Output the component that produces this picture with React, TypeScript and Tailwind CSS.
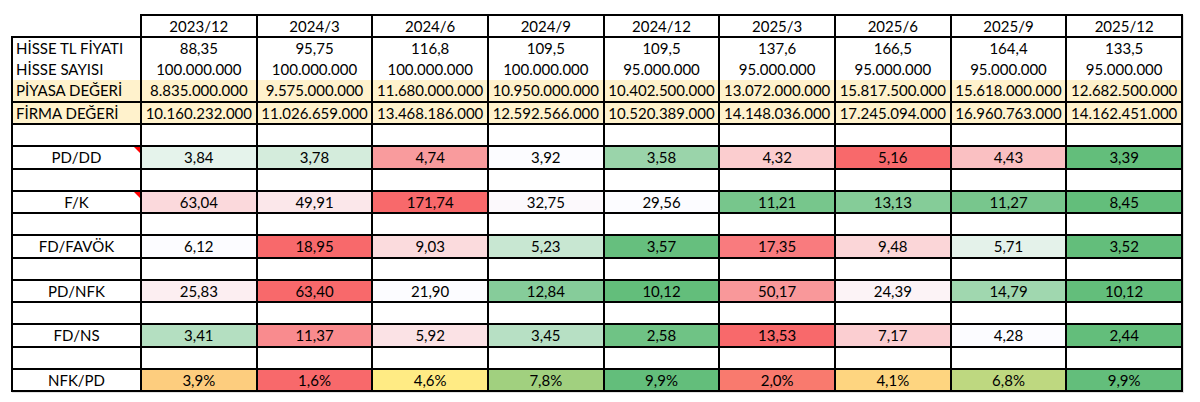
import React from "react";

const periods = ["2023/12", "2024/3", "2024/6", "2024/9", "2024/12", "2025/3", "2025/6", "2025/9", "2025/12"];

const priceRow = ["88,35", "95,75", "116,8", "109,5", "109,5", "137,6", "166,5", "164,4", "133,5"];
const sharesRow = ["100.000.000", "100.000.000", "100.000.000", "100.000.000", "95.000.000", "95.000.000", "95.000.000", "95.000.000", "95.000.000"];
const mcapRow = ["8.835.000.000", "9.575.000.000", "11.680.000.000", "10.950.000.000", "10.402.500.000", "13.072.000.000", "15.817.500.000", "15.618.000.000", "12.682.500.000"];
const evRow = ["10.160.232.000", "11.026.659.000", "13.468.186.000", "12.592.566.000", "10.520.389.000", "14.148.036.000", "17.245.094.000", "16.960.763.000", "14.162.451.000"];

type Cell = { v: string; bg: string };
type Metric = { label: string; note?: boolean; cells: Cell[] };

const metrics: Metric[] = [
  {
    label: "PD/DD",
    note: true,
    cells: [
      { v: "3,84", bg: "bg-[#E5F3EB]" },
      { v: "3,78", bg: "bg-[#D4ECDC]" },
      { v: "4,74", bg: "bg-[#F99B9D]" },
      { v: "3,92", bg: "bg-[#FCFCFF]" },
      { v: "3,58", bg: "bg-[#9AD4AA]" },
      { v: "4,32", bg: "bg-[#FBCDCF]" },
      { v: "5,16", bg: "bg-[#F8696B]" },
      { v: "4,43", bg: "bg-[#FAC0C2]" },
      { v: "3,39", bg: "bg-[#63BE7B]" },
    ],
  },
  {
    label: "F/K",
    note: true,
    cells: [
      { v: "63,04", bg: "bg-[#FBD9DC]" },
      { v: "49,91", bg: "bg-[#FBE7EA]" },
      { v: "171,74", bg: "bg-[#F8696B]" },
      { v: "32,75", bg: "bg-[#FCF9FC]" },
      { v: "29,56", bg: "bg-[#FCFCFF]" },
      { v: "11,21", bg: "bg-[#77C68C]" },
      { v: "13,13", bg: "bg-[#85CC98]" },
      { v: "11,27", bg: "bg-[#78C68D]" },
      { v: "8,45", bg: "bg-[#63BE7B]" },
    ],
  },
  {
    label: "FD/FAVÖK",
    cells: [
      { v: "6,12", bg: "bg-[#FCFCFF]" },
      { v: "18,95", bg: "bg-[#F8696B]" },
      { v: "9,03", bg: "bg-[#FBDBDD]" },
      { v: "5,23", bg: "bg-[#C8E7D2]" },
      { v: "3,57", bg: "bg-[#66BF7E]" },
      { v: "17,35", bg: "bg-[#F97B7E]" },
      { v: "9,48", bg: "bg-[#FBD6D8]" },
      { v: "5,71", bg: "bg-[#E4F2EA]" },
      { v: "3,52", bg: "bg-[#63BE7B]" },
    ],
  },
  {
    label: "PD/NFK",
    cells: [
      { v: "25,83", bg: "bg-[#FCEEF1]" },
      { v: "63,40", bg: "bg-[#F8696B]" },
      { v: "21,90", bg: "bg-[#FCFCFF]" },
      { v: "12,84", bg: "bg-[#86CC9A]" },
      { v: "10,12", bg: "bg-[#63BE7B]" },
      { v: "50,17", bg: "bg-[#F9989A]" },
      { v: "24,39", bg: "bg-[#FCF3F6]" },
      { v: "14,79", bg: "bg-[#A0D7AF]" },
      { v: "10,12", bg: "bg-[#63BE7B]" },
    ],
  },
  {
    label: "FD/NS",
    cells: [
      { v: "3,41", bg: "bg-[#B4DFC1]" },
      { v: "11,37", bg: "bg-[#F98B8E]" },
      { v: "5,92", bg: "bg-[#FBE2E5]" },
      { v: "3,45", bg: "bg-[#B7E0C4]" },
      { v: "2,58", bg: "bg-[#6FC385]" },
      { v: "13,53", bg: "bg-[#F8696B]" },
      { v: "7,17", bg: "bg-[#FBCED1]" },
      { v: "4,28", bg: "bg-[#FCFCFF]" },
      { v: "2,44", bg: "bg-[#63BE7B]" },
    ],
  },
  {
    label: "NFK/PD",
    cells: [
      { v: "3,9%", bg: "bg-[#FDCD7E]" },
      { v: "1,6%", bg: "bg-[#F8696B]" },
      { v: "4,6%", bg: "bg-[#FFEB84]" },
      { v: "7,8%", bg: "bg-[#A1D07F]" },
      { v: "9,9%", bg: "bg-[#63BE7B]" },
      { v: "2,0%", bg: "bg-[#F97A6E]" },
      { v: "4,1%", bg: "bg-[#FED580]" },
      { v: "6,8%", bg: "bg-[#BED880]" },
      { v: "9,9%", bg: "bg-[#63BE7B]" },
    ],
  },
];

function EmptyRow() {
  return (
    <>
      <div className="h-[22.25px] border-l-2 border-r-2 border-b-2 border-black bg-white" />
      {periods.map((p) => (
        <div key={p} className="h-[22.25px] border-r-2 border-b-2 border-black bg-white" />
      ))}
    </>
  );
}

function MetricRow({ m }: { m: Metric }) {
  return (
    <>
      <div className="relative flex h-[22.25px] items-center justify-center border-l-2 border-r-2 border-b-2 border-black bg-white">
        {m.label}
        {m.note && (
          <span className="absolute right-0 top-0 h-0 w-0 border-l-[6px] border-t-[6px] border-l-transparent border-t-[#FF0000]" />
        )}
      </div>
      {m.cells.map((c, i) => (
        <div
          key={i}
          className={`flex h-[22.25px] items-center justify-center border-r-2 border-b-2 border-black ${c.bg}`}
        >
          {c.v}
        </div>
      ))}
    </>
  );
}

export default function App() {
  return (
    <div className="h-[402px] w-[1200px] overflow-hidden bg-white font-['Lato',sans-serif] text-[15px] text-black">
      <div className="ml-[11px] mt-[14px] grid w-[1172px] grid-cols-[131px_repeat(9,1fr)] shadow-[1px_1px_0_#e2e2e2]">
        {/* header */}
        <div className="h-[24px] border-r-2 border-b-2 border-black bg-white" />
        {periods.map((p) => (
          <div
            key={p}
            className="flex h-[24px] items-center justify-center border-t-2 border-r-2 border-b-2 border-black bg-white"
          >
            {p}
          </div>
        ))}

        {/* price */}
        <div className="flex h-[21px] items-center border-l-2 border-r-2 border-black bg-white pl-[3px]">HİSSE TL FİYATI</div>
        {priceRow.map((v, i) => (
          <div key={i} className="flex h-[21px] items-center justify-center border-r-2 border-black bg-white">
            {v}
          </div>
        ))}

        {/* shares */}
        <div className="flex h-[21px] items-center border-l-2 border-r-2 border-black bg-white pl-[3px]">HİSSE SAYISI</div>
        {sharesRow.map((v, i) => (
          <div key={i} className="flex h-[21px] items-center justify-center border-r-2 border-black bg-white">
            {v}
          </div>
        ))}

        {/* market cap */}
        <div className="flex h-[23px] items-center border-l-2 border-r-2 border-b-2 border-black bg-[#FFF2CC] pl-[3px]">PİYASA DEĞERİ</div>
        {mcapRow.map((v, i) => (
          <div key={i} className="flex h-[23px] items-center justify-center border-r-2 border-b-2 border-black bg-[#FFF2CC]">
            {v}
          </div>
        ))}

        {/* enterprise value */}
        <div className="flex h-[22px] items-center border-l-2 border-r-2 border-b-2 border-black bg-[#FFF2CC] pl-[3px]">FİRMA DEĞERİ</div>
        {evRow.map((v, i) => (
          <div key={i} className="flex h-[22px] items-center justify-center border-r-2 border-b-2 border-black bg-[#FFF2CC]">
            {v}
          </div>
        ))}

        {metrics.map((m) => (
          <React.Fragment key={m.label}>
            <EmptyRow />
            <MetricRow m={m} />
          </React.Fragment>
        ))}
      </div>
    </div>
  );
}
